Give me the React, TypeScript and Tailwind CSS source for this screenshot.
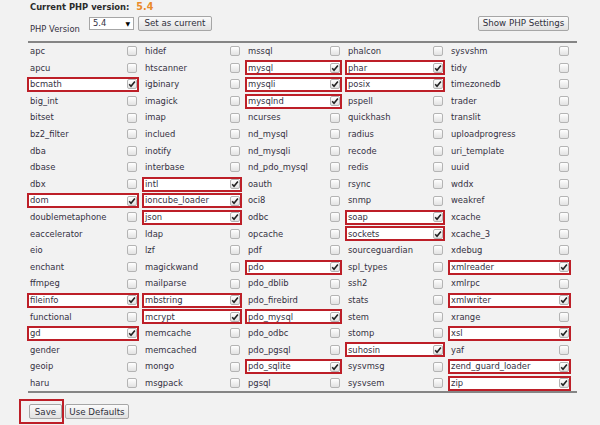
import React from 'react';

// '*' marks an enabled extension
const columns: string[][] = [
  ['apc', 'apcu', 'bcmath*', 'big_int', 'bitset', 'bz2_filter', 'dba', 'dbase', 'dbx', 'dom*', 'doublemetaphone', 'eaccelerator', 'eio', 'enchant', 'ffmpeg', 'fileinfo*', 'functional', 'gd*', 'gender', 'geoip', 'haru'],
  ['hidef', 'htscanner', 'igbinary', 'imagick', 'imap', 'inclued', 'inotify', 'interbase', 'intl*', 'ioncube_loader*', 'json*', 'ldap', 'lzf', 'magickwand', 'mailparse', 'mbstring*', 'mcrypt*', 'memcache', 'memcached', 'mongo', 'msgpack'],
  ['mssql', 'mysql*', 'mysqli*', 'mysqlnd*', 'ncurses', 'nd_mysql', 'nd_mysqli', 'nd_pdo_mysql', 'oauth', 'oci8', 'odbc', 'opcache', 'pdf', 'pdo*', 'pdo_dblib', 'pdo_firebird', 'pdo_mysql*', 'pdo_odbc', 'pdo_pgsql', 'pdo_sqlite*', 'pgsql'],
  ['phalcon', 'phar*', 'posix*', 'pspell', 'quickhash', 'radius', 'recode', 'redis', 'rsync', 'snmp', 'soap*', 'sockets*', 'sourceguardian', 'spl_types', 'ssh2', 'stats', 'stem', 'stomp', 'suhosin*', 'sysvmsg', 'sysvsem'],
  ['sysvshm', 'tidy', 'timezonedb', 'trader', 'translit', 'uploadprogress', 'uri_template', 'uuid', 'wddx', 'weakref', 'xcache', 'xcache_3', 'xdebug', 'xmlreader*', 'xmlrpc', 'xmlwriter*', 'xrange', 'xsl*', 'yaf', 'zend_guard_loader*', 'zip*'],
];

const Checkbox: React.FC<{ checked: boolean }> = ({ checked }) => (
  <span className="w-[10px] h-[10px] rounded-[2px] border border-[#b4b4b4] bg-gradient-to-b from-white to-[#e2e2e2] flex items-center justify-center shrink-0">
    {checked && (
      <svg width="8" height="8" viewBox="0 0 8 8">
        <path d="M1.2 4.3 L3 6.2 L6.9 1.4" fill="none" stroke="#222" strokeWidth="1.6" />
      </svg>
    )}
  </span>
);

const Button: React.FC<{ label: string; className?: string }> = ({ label, className }) => (
  <button className={`h-[15px] px-0 whitespace-nowrap border border-[#a6a6a6] rounded-[2px] bg-gradient-to-b from-[#fbfbfb] to-[#e1e1e1] text-[8.7px] leading-none text-[#2f2f3a] flex items-center justify-center ${className ?? ''}`}>
    {label}
  </button>
);

export default function App() {
  const rows = columns[0].map((_, i) => columns.map((col) => col[i]));

  return (
    <div className="w-[600px] h-[425px] bg-[#f2f2f2] overflow-hidden font-['DejaVu_Sans',sans-serif] text-[8.4px] text-[#34303f]">
      <div className="ml-[27px] w-[550px]">
        <div className="h-[15px] flex items-center pl-[3px] font-bold">
          <span className="text-[#2b2b2b]">Current PHP version:</span>
          <span className="ml-[7px] text-[#e98a2a] text-[9.6px]">5.4</span>
        </div>

        <div className="h-[17px] flex items-center">
          <span className="w-[62px] pl-[3px] self-end leading-[10px] mb-[-2px]">PHP Version</span>
          <div className="w-[45px] h-[13px] border border-[#a6a6a6] bg-white flex items-center justify-between pl-[3px] pr-[3px]">
            <span>5.4</span>
            <span className="text-[6px] text-black">▼</span>
          </div>
          <Button label="Set as current" className="ml-[4px] w-[74px]" />
          <Button label="Show PHP Settings" className="ml-auto mr-[8px] w-[91px]" />
        </div>

        <div className="mt-[9px] ml-[1px] h-[2px] bg-[#858585]" />

        <div className="grid grid-cols-[112px_100px_97px_100px_123px] gap-x-[3px]">
          {rows.map((row, i) =>
            row.map((entry) => {
              const checked = entry.endsWith('*');
              const name = checked ? entry.slice(0, -1) : entry;
              return (
                <div key={`${i}-${name}`} className="h-[16.6px] flex items-center">
                  <div
                    className={`w-full h-[15px] flex items-center justify-between pl-[1px] pr-[0.5px] border-2 ${
                      checked ? 'border-[#bd1f28] bg-white' : 'border-transparent'
                    }`}
                  >
                    <span className="leading-none">{name}</span>
                    <Checkbox checked={checked} />
                  </div>
                </div>
              );
            })
          )}
        </div>

        <div className="ml-[1px] h-[2px] bg-[#858585]" />
      </div>

      <div className="flex items-start ml-[19px] mt-[6px]">
        <div className="w-[45px] h-[25px] border-2 border-solid border-[#bd1f28] pl-[8px] pt-[3px]">
          <Button label="Save" className="w-[33px]" />
        </div>
        <Button label="Use Defaults" className="ml-[1px] mt-[5px] w-[64px]" />
      </div>
    </div>
  );
}
